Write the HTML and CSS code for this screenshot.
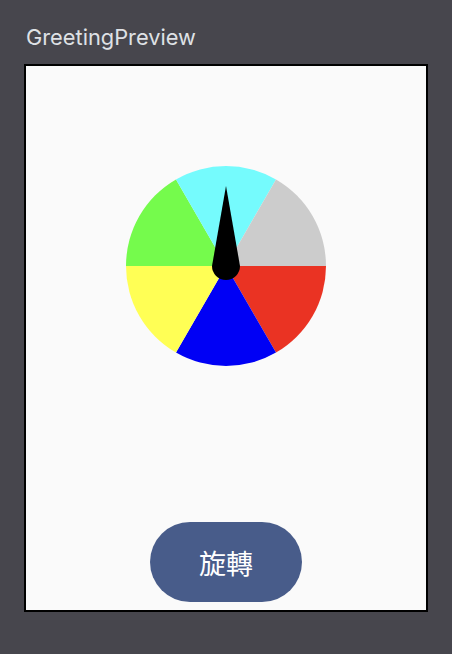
FILE: index.html
```html
<!DOCTYPE html>
<html>
<head>
<meta charset="utf-8">
<link rel="stylesheet" href="styles.css">
</head>
<body>
<div class="page">
  <div class="title">GreetingPreview</div>
  <div class="frame">
    <div class="wheel">
      <svg width="200" height="200" viewBox="0 0 200 200">
        <path d="M100 100 L200 100 A100 100 0 0 1 150 186.6 Z" fill="#EA3323"/>
        <path d="M100 100 L150 186.6 A100 100 0 0 1 50 186.6 Z" fill="#0000F5"/>
        <path d="M100 100 L50 186.6 A100 100 0 0 1 0 100 Z" fill="#FFFF55"/>
        <path d="M100 100 L0 100 A100 100 0 0 1 50 13.4 Z" fill="#75FB4C"/>
        <path d="M100 100 L50 13.4 A100 100 0 0 1 150 13.4 Z" fill="#75FBFD"/>
        <path d="M100 100 L150 13.4 A100 100 0 0 1 200 100 Z" fill="#CCCCCC"/>
        <path d="M100 20 L86 100 A14 14 0 0 0 114 100 Z" fill="#000"/>
      </svg>
    </div>
    <button class="spin">旋轉</button>
  </div>
</div>
</body>
</html>
```
FILE: styles.css
```css
html, body {
  margin: 0;
  padding: 0;
  background: #47464D;
}
.page {
  width: 452px;
  height: 654px;
  box-sizing: border-box;
  padding: 24px 24px 0 24px;
  display: flex;
  flex-direction: column;
}
.title {
  font-family: Inter, "Noto Sans", sans-serif;
  font-size: 21.8px;
  line-height: 26px;
  color: #DFE1E5;
  padding-left: 2px;
  height: 40px;
}
.frame {
  width: 404px;
  height: 548px;
  box-sizing: border-box;
  border: 2px solid #000;
  background: #FAFAFA;
  display: flex;
  flex-direction: column;
  align-items: center;
  padding-top: 100px;
  padding-bottom: 8px;
}
.wheel {
  width: 200px;
  height: 200px;
}
.wheel svg {
  display: block;
}
.spin {
  margin-top: auto;
  width: 152px;
  height: 80px;
  border: none;
  border-radius: 40px;
  background: #485C8A;
  color: #FFFFFF;
  font-family: "Noto Sans CJK TC", sans-serif;
  font-size: 27px;
  padding: 0;
}
```
